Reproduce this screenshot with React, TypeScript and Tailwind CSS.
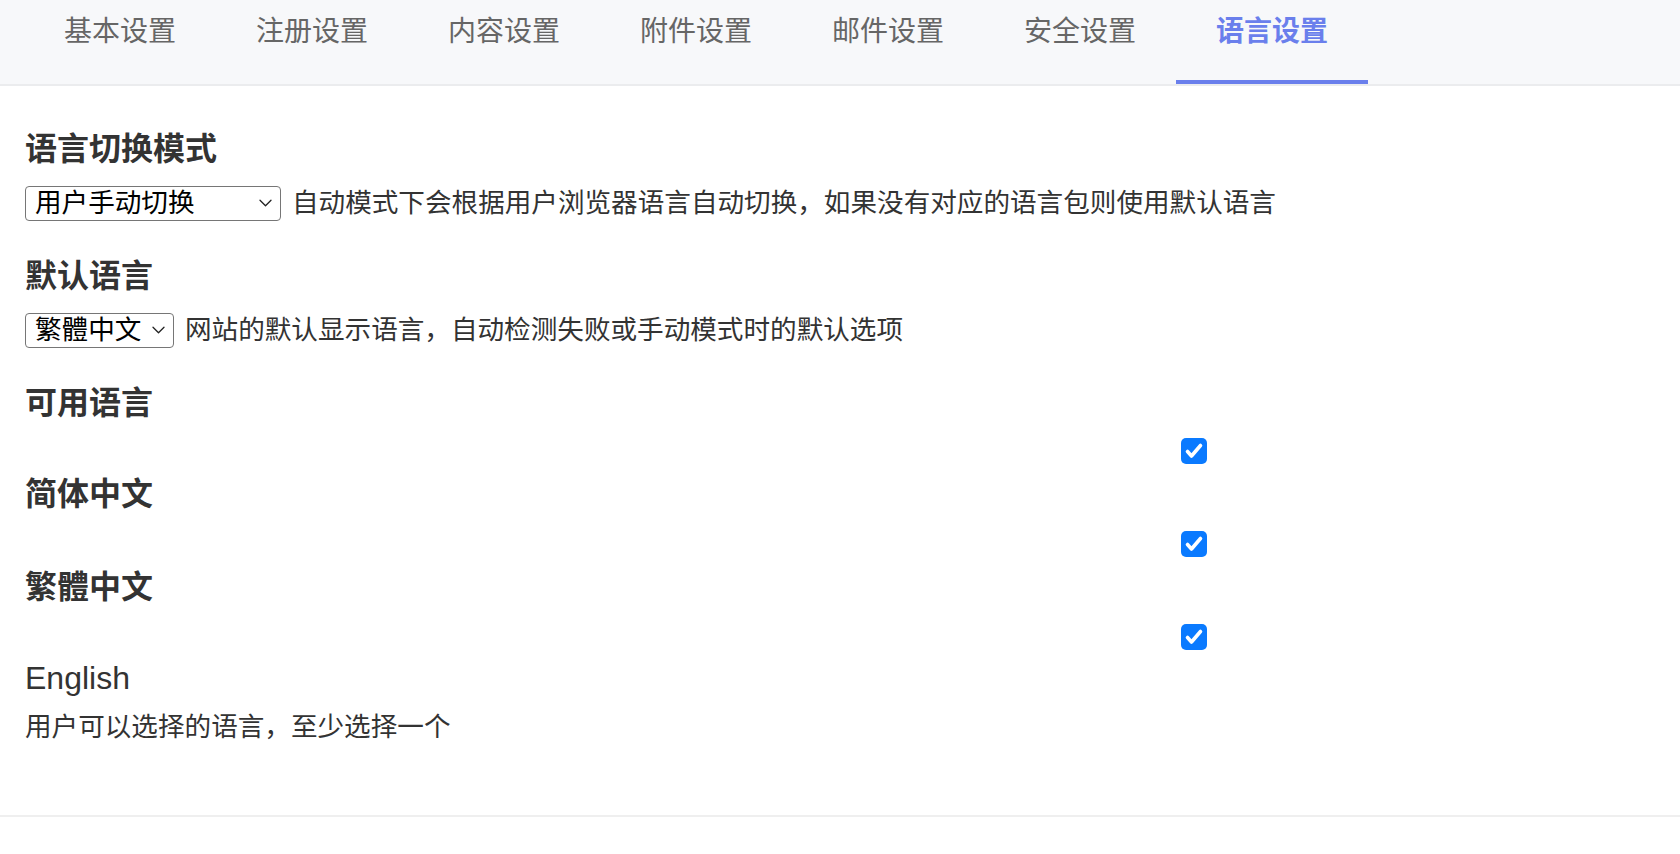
import React from "react";

const tabs = ["基本设置", "注册设置", "内容设置", "附件设置", "邮件设置", "安全设置", "语言设置"];
const font = { fontFamily: '"Liberation Sans", "Noto Sans CJK SC", sans-serif' };

function Chevron() {
  return (
    <svg width="13" height="8" viewBox="0 0 13 8" fill="none">
      <path d="M1 1.2 L6.5 6.8 L12 1.2" stroke="#222" strokeWidth="1.3" strokeLinecap="round" strokeLinejoin="round" />
    </svg>
  );
}

function FakeSelect({ value, width }: { value: string; width: string }) {
  return (
    <div
      className={`inline-flex items-center justify-between h-[35px] ${width} border border-[#767676] rounded-[4px] pl-[9px] pr-[8px] text-[26.6px] leading-none text-black bg-white shrink-0`}
    >
      <span>{value}</span>
      <Chevron />
    </div>
  );
}

function Check() {
  return (
    <div className="w-[26px] h-[26px] rounded-[5px] bg-[#0a7aff] flex items-center justify-center">
      <svg width="26" height="26" viewBox="0 0 26 26" fill="none">
        <path d="M6.5 13.5 L10.5 18 L19.5 7.5" stroke="#fff" strokeWidth="3.6" strokeLinecap="round" strokeLinejoin="round" />
      </svg>
    </div>
  );
}

export default function App() {
  const langs = ["简体中文", "繁體中文", "English"];
  return (
    <div className="w-[1680px] h-[854px] bg-white text-[#333]" style={font}>
      <div className="h-[86px] bg-[#f7f8fa] border-b-2 border-[#ebecee] flex pl-[24px]">
        {tabs.map((t, i) => {
          const active = i === tabs.length - 1;
          return (
            <div
              key={t}
              className={`w-[192px] h-[84px] pt-[14px] text-center text-[28px] leading-[36px] ${
                active ? "text-[#6a7fec] font-semibold border-b-4 border-[#6a7fec]" : "text-[#666]"
              }`}
            >
              {t}
            </div>
          );
        })}
      </div>

      <div className="px-[25px] pt-[43px] pb-[70px] border-b-2 border-[#efefef]">
        <div className="text-[32px] leading-[40px] font-semibold">语言切换模式</div>
        <div className="mt-[16px] flex items-center gap-[11px]">
          <FakeSelect value="用户手动切换" width="w-[256px]" />
          <span className="text-[26.6px] leading-[36px]">自动模式下会根据用户浏览器语言自动切换，如果没有对应的语言包则使用默认语言</span>
        </div>

        <div className="mt-[35px] text-[32px] leading-[40px] font-semibold">默认语言</div>
        <div className="mt-[16px] flex items-center gap-[11px]">
          <FakeSelect value="繁體中文" width="w-[149px]" />
          <span className="text-[26.6px] leading-[36px]">网站的默认显示语言，自动检测失败或手动模式时的默认选项</span>
        </div>

        <div className="mt-[35px] text-[32px] leading-[40px] font-semibold">可用语言</div>
        <div className="mt-[15px] flex flex-col gap-[17px]">
          {langs.map((l) => (
            <div key={l} className="flex flex-col">
              <div className="ml-[1156px]">
                <Check />
              </div>
              <div
                className={`text-[32px] leading-[40px] ${l === "English" ? "font-normal mt-[8px]" : "font-semibold mt-[10px]"}`}
              >
                {l}
              </div>
            </div>
          ))}
        </div>
        <div className="mt-[11px] text-[26.6px] leading-[36px]">用户可以选择的语言，至少选择一个</div>
      </div>
    </div>
  );
}
